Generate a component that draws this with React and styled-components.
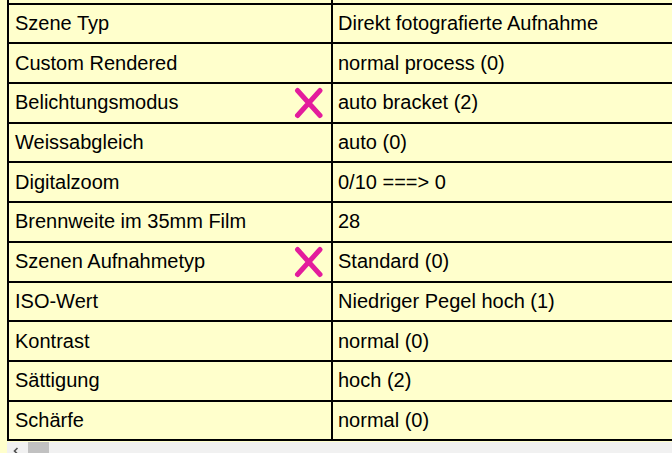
import React, { useLayoutEffect, useRef } from 'react';
import styled, { createGlobalStyle } from 'styled-components';

const GlobalStyle = createGlobalStyle`
  html, body {
    margin: 0;
    padding: 0;
    background-color: #ffffcc;
    overflow: hidden;
  }
`;

const Viewport = styled.div`
  height: 100vh;
  overflow: hidden;
  padding: 8px 0 8px 7px;
  box-sizing: border-box;
`;

const ScrollArea = styled.div`
  width: 100%;
`;

const TableClip = styled.div`
  overflow: hidden;
`;

const DataTable = styled.table`
  border-collapse: collapse;
  width: 960px;
  background-color: #ffffcc;
  font-family: 'Liberation Sans', Arial, sans-serif;
  font-size: 20px;
  color: #000;
`;

const Row = styled.tr``;

const Cell = styled.td`
  border: 2px solid #000;
  padding: ${(p) => (p.$label ? '0 7px 0 6px' : '0 6px 0 5px')};
  height: 37.7px;
  line-height: 23px;
  width: ${(p) => (p.$label ? '309px' : 'auto')};
  white-space: nowrap;
  vertical-align: middle;
`;

const LabelWrap = styled.div`
  display: flex;
  align-items: center;
  justify-content: space-between;
`;

const Mark = styled.svg`
  display: block;
  width: 30px;
  height: 32px;
  flex: none;
`;

const ScrollBar = styled.div`
  display: flex;
  align-items: center;
  height: 15px;
  margin-top: 1px;
  background-color: #f1f1f1;
`;

const ArrowButton = styled.svg`
  display: block;
  width: 19px;
  height: 15px;
  flex: none;
`;

const Thumb = styled.div`
  width: 21px;
  height: 15px;
  margin-left: 2px;
  background-color: #c1c1c1;
`;

const rows = [
  { label: 'Farbraum', value: 'sRGB (1)' },
  { label: 'Szene Typ', value: 'Direkt fotografierte Aufnahme', anchor: true },
  { label: 'Custom Rendered', value: 'normal process (0)' },
  { label: 'Belichtungsmodus', value: 'auto bracket (2)', marked: true },
  { label: 'Weissabgleich', value: 'auto (0)' },
  { label: 'Digitalzoom', value: '0/10 ===> 0' },
  { label: 'Brennweite im 35mm Film', value: '28' },
  { label: 'Szenen Aufnahmetyp', value: 'Standard (0)', marked: true },
  { label: 'ISO-Wert', value: 'Niedriger Pegel hoch (1)' },
  { label: 'Kontrast', value: 'normal (0)' },
  { label: 'Sättigung', value: 'hoch (2)' },
  { label: 'Schärfe', value: 'normal (0)' },
];

const CrossMark = () => (
  <Mark viewBox="0 0 30 32">
    <path
      d="M3.5 3.5 L26 28.5 M26 3.5 L3.5 28.5"
      stroke="#e31c9c"
      strokeWidth="5"
      strokeLinecap="round"
      fill="none"
    />
  </Mark>
);

const LeftArrow = () => (
  <ArrowButton viewBox="0 0 19 15">
    <path
      d="M10.5 6 L7.5 9 L10.5 12"
      stroke="#505050"
      strokeWidth="1.6"
      fill="none"
    />
  </ArrowButton>
);

const App = () => {
  const viewportRef = useRef(null);
  const anchorRef = useRef(null);

  useLayoutEffect(() => {
    const vp = viewportRef.current;
    const anchor = anchorRef.current;
    if (!vp || !anchor) return;
    const offset =
      anchor.getBoundingClientRect().top - vp.getBoundingClientRect().top;
    vp.scrollTop = vp.scrollTop + offset - 4;
  }, []);

  return (
    <>
      <GlobalStyle />
      <Viewport ref={viewportRef}>
        <ScrollArea>
          <TableClip>
            <DataTable>
              <tbody>
                {rows.map((row) => (
                  <Row key={row.label} ref={row.anchor ? anchorRef : null}>
                    <Cell $label>
                      <LabelWrap>
                        <span>{row.label}</span>
                        {row.marked && <CrossMark />}
                      </LabelWrap>
                    </Cell>
                    <Cell>{row.value}</Cell>
                  </Row>
                ))}
              </tbody>
            </DataTable>
          </TableClip>
          <ScrollBar>
            <LeftArrow />
            <Thumb />
          </ScrollBar>
        </ScrollArea>
      </Viewport>
    </>
  );
};

export default App;
